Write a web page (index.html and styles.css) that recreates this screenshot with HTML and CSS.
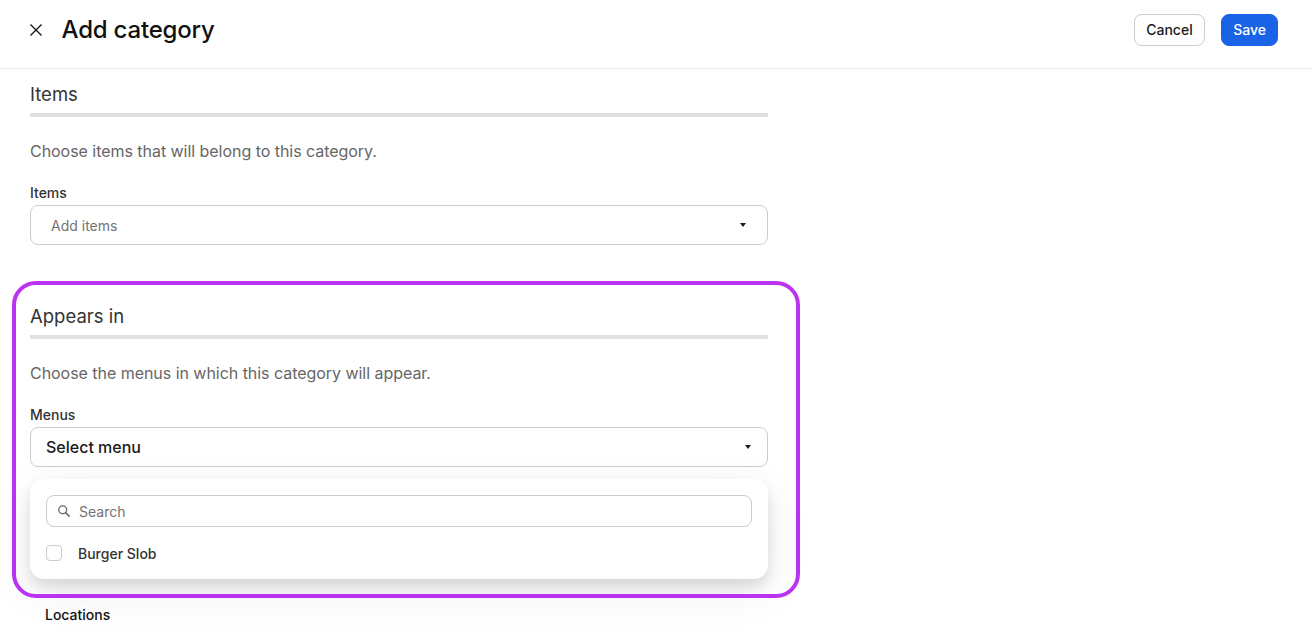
FILE: index.html
```html
<!DOCTYPE html>
<html lang="en">
<head>
    <meta charset="UTF-8">
    <meta name="viewport" content="width=device-width, initial-scale=1.0">
    <title>Add category</title>
    <link rel="stylesheet" href="styles.css">
</head>
<body>

<header class="topbar">
    <button class="close" aria-label="Close">
        <svg width="14" height="14" viewBox="0 0 14 14"><path d="M1.5 1.5l11 11M12.5 1.5l-11 11" stroke="#1a1a1a" stroke-width="1.4" fill="none"/></svg>
    </button>
    <h1 class="title">Add category</h1>
    <div class="actions">
        <button class="btn">Cancel</button>
        <button class="btn btn-primary">Save</button>
    </div>
</header>

<main class="content">
    <section class="section section-items">
        <h2 class="section-title">Items</h2>
        <p class="section-text">Choose items that will belong to this category.</p>
        <label class="field-label">Items</label>
        <div class="select select-placeholder">
            <span>Add items</span>
            <span class="caret"></span>
        </div>
    </section>

    <section class="section section-appears">
        <div class="highlight"></div>
        <h2 class="section-title">Appears in</h2>
        <p class="section-text">Choose the menus in which this category will appear.</p>
        <label class="field-label">Menus</label>
        <div class="select-wrap">
            <div class="select select-open">
                <span>Select menu</span>
                <span class="caret"></span>
            </div>
            <div class="popover">
                <div class="search">
                    <svg width="14" height="14" viewBox="0 0 14 14"><circle cx="5.7" cy="5.7" r="3.9" stroke="#666" stroke-width="1.3" fill="none"/><path d="M8.6 8.6l4 4" stroke="#666" stroke-width="1.5" fill="none"/></svg>
                    <span>Search</span>
                </div>
                <div class="option">
                    <span class="checkbox"></span>
                    <span>Burger Slob</span>
                </div>
            </div>
        </div>
        <label class="field-label field-locations">Locations</label>
    </section>
</main>

</body>
</html>
```

FILE: styles.css
```css
* {
    box-sizing: border-box;
}

body {
    margin: 0;
    height: 633px;
    overflow: hidden;
    background: #fff;
    font-family: Inter, "Liberation Sans", sans-serif;
    color: #1a1a1a;
}

.topbar {
    display: flex;
    align-items: center;
    height: 69px;
    padding: 0 34px 9px 29px;
    border-bottom: 1px solid #e8e8e8;
}

.close {
    display: flex;
    padding: 0;
    border: none;
    background: none;
    margin-right: 18.5px;
}

.title {
    margin: 0;
    font-size: 24px;
    font-weight: 500;
    letter-spacing: -0.2px;
    color: #111;
}

.actions {
    display: flex;
    gap: 16px;
    margin-left: auto;
}

.btn {
    height: 32px;
    padding: 0 11.5px;
    border: 1px solid #ccc;
    border-radius: 8px;
    background: #fff;
    font-family: inherit;
    font-size: 14px;
    font-weight: 500;
    color: #1a1a1a;
}

.btn-primary {
    padding: 0 11px;
    border-color: #1a62e6;
    background: #1a62e6;
    color: #fff;
}

.content {
    width: 738px;
    margin-left: 30px;
}

.section {
    position: relative;
}

.section-items {
    height: 222px;
}

.section-title {
    margin: 0;
    height: 48px;
    padding-top: 11px;
    border-bottom: 4px solid #e0e0e0;
    font-size: 18.5px;
    line-height: 28px;
    font-weight: 400;
    color: #333;
}

.section-text {
    margin: 23px 0 0;
    font-size: 16px;
    line-height: 22px;
    letter-spacing: -0.04px;
    color: #666;
}

.field-label {
    display: block;
    margin-top: 21px;
    font-size: 14px;
    line-height: 20px;
    font-weight: 500;
    color: #333;
}

.select {
    display: flex;
    align-items: center;
    justify-content: space-between;
    height: 40px;
    margin-top: 2px;
    border: 1px solid #ccc;
    border-radius: 8px;
}

.select-placeholder {
    padding: 0 20px;
    font-size: 14px;
    color: #737373;
}

.select-open {
    padding: 0 15px;
    font-size: 16px;
    font-weight: 500;
    color: #1a1a1a;
}

.caret {
    width: 0;
    height: 0;
    margin-right: 1px;
    border-left: 3.5px solid transparent;
    border-right: 3.5px solid transparent;
    border-top: 4px solid #1a1a1a;
}

.select-wrap {
    position: relative;
}

.popover {
    position: absolute;
    top: 52px;
    left: 0;
    right: 0;
    height: 100px;
    padding: 16px;
    border-radius: 14px;
    background: #fff;
    box-shadow: 0 8px 14px rgba(0, 0, 0, 0.12), 0 12px 50px rgba(0, 0, 0, 0.07);
}

.search {
    display: flex;
    align-items: center;
    gap: 8px;
    height: 32px;
    padding-left: 10px;
    border: 1px solid #ccc;
    border-radius: 8px;
    font-size: 14px;
    color: #737373;
}

.option {
    display: flex;
    align-items: center;
    gap: 16px;
    margin-top: 10px;
    height: 32px;
    font-size: 14px;
    font-weight: 500;
    color: #333;
}

.checkbox {
    width: 16px;
    height: 16px;
    border: 1px solid #ccc;
    border-radius: 4px;
}

.field-locations {
    margin: 138px 0 0 15px;
    color: #111;
}

.highlight {
    position: absolute;
    top: -10px;
    left: -18px;
    width: 788px;
    height: 317px;
    border: 4px solid #bb33f0;
    border-radius: 24px;
    z-index: 1;
    pointer-events: none;
}
```
